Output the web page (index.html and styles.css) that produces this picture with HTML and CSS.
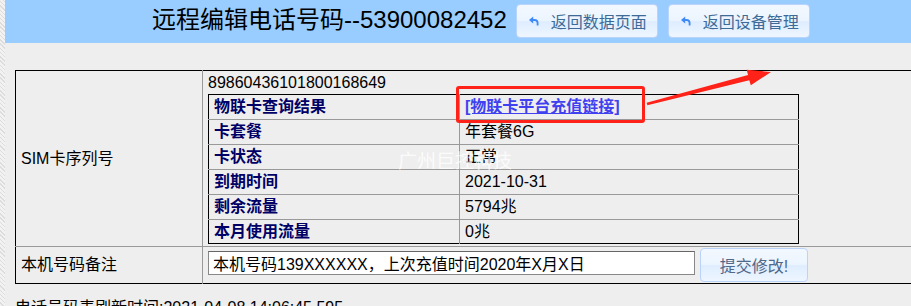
FILE: index.html
```html
<!DOCTYPE html>
<html lang="zh-CN">
<head>
<meta charset="utf-8">
<title>远程编辑电话号码</title>
<link rel="stylesheet" href="styles.css">
</head>
<body>
<div class="stripe"></div>
<div class="main">
  <div class="header">
    <h1 class="title">远程编辑电话号码--53900082452</h1>
    <button class="btn nav-btn"><svg class="ico" width="10" height="10" viewBox="0 0 10 10"><polygon points="0,4 4.2,0.5 4.2,7.5" fill="#3d8af7"/><path d="M4 4 H5.5 Q8.6 4 8.6 7 V9.5" fill="none" stroke="#3d8af7" stroke-width="1.8"/></svg>返回数据页面</button>
    <button class="btn nav-btn"><svg class="ico" width="10" height="10" viewBox="0 0 10 10"><polygon points="0,4 4.2,0.5 4.2,7.5" fill="#3d8af7"/><path d="M4 4 H5.5 Q8.6 4 8.6 7 V9.5" fill="none" stroke="#3d8af7" stroke-width="1.8"/></svg>返回设备管理</button>
  </div>
  <table class="outer">
    <tr class="row-sim">
      <td class="lbl">SIM卡序列号</td>
      <td class="val">
        <div class="serial">89860436101800168649</div>
        <table class="inner">
          <tr><th>物联卡查询结果</th><td><a class="link" href="#">[物联卡平台充值链接]</a></td></tr>
          <tr><th>卡套餐</th><td>年套餐6G</td></tr>
          <tr><th>卡状态</th><td>正常</td></tr>
          <tr><th>到期时间</th><td>2021-10-31</td></tr>
          <tr><th>剩余流量</th><td>5794兆</td></tr>
          <tr><th>本月使用流量</th><td>0兆</td></tr>
        </table>
      </td>
    </tr>
    <tr class="row-note">
      <td class="lbl">本机号码备注</td>
      <td class="val">
        <div class="note-form">
          <input class="note-input" type="text" value="本机号码139XXXXXX，上次充值时间2020年X月X日">
          <button class="btn submit-btn">提交修改!</button>
        </div>
      </td>
    </tr>
  </table>
  <div class="refresh">电话号码表刷新时间:2021-04-08 14:06:45.595</div>
</div>
<div class="watermark">广州巨控科技</div>
<div class="mark-box"></div>
<svg class="mark-arrow" width="911" height="306" viewBox="0 0 911 306"><polygon points="647.4,105.2 749.3,80.2 750.8,85.3 771,72 746.6,69.8 748.1,75.1 646.6,102.8" fill="#ff2218"/></svg>
</body>
</html>
```

FILE: styles.css
```css
html, body {
  margin: 0;
  padding: 0;
  height: 306px;
  overflow: hidden;
  background: #eeeeee;
  font-family: "Liberation Sans", "Noto Sans CJK SC", sans-serif;
  font-size: 16px;
  color: #000;
}
body {
  display: flex;
  position: relative;
}
.stripe {
  width: 5px;
  flex: none;
  background:
    repeating-linear-gradient(45deg, #f2f2f2 0 2px, #dcdcdc 2px 3px),
    #eee;
}
.main {
  flex: 1;
  min-width: 0;
}
.header {
  height: 43px;
  background: #99ccff;
  display: flex;
  align-items: center;
  padding-left: 147px;
}
.title {
  margin: 0 9px 0 0;
  font-size: 24px;
  font-weight: normal;
  line-height: 30px;
  position: relative;
  top: -2px;
}
.btn {
  font-family: "Liberation Sans", "Noto Sans CJK SC", sans-serif;
  border: 1px solid #b9d3fb;
  border-radius: 4px;
  background: linear-gradient(#f3f8ff 0%, #ecf5ff 48%, #deedff 52%, #eef6ff 100%);
  color: #3d6a96;
  cursor: pointer;
  padding: 0;
}
.nav-btn {
  width: 142px;
  height: 34px;
  margin: 0 10px 0 0;
  font-size: 16px;
  display: flex;
  align-items: center;
  padding-left: 12px;
  gap: 12px;
  position: relative;
  top: -1px;
}
.ico { flex: none; }
.outer {
  margin: 27px 0 0 10px;
  width: 905px;
  border-collapse: collapse;
  border: 1px solid #000;
}
.outer > tbody > tr > td,
.outer > tr > td {
  padding: 0;
}
.lbl {
  width: 181px;
  padding: 0 0 0 5px !important;
  border-right: 1px solid #999;
  vertical-align: middle;
  line-height: 20px;
}
.val {
  padding: 2px 0 2px 5px !important;
  vertical-align: top;
}
.row-sim { border-bottom: 1px solid #999; }
.serial {
  line-height: 20px;
  margin-bottom: 1px;
}
.inner {
  width: 591px;
  border-collapse: collapse;
  border: 1px solid #000;
}
.inner th, .inner td {
  height: 24px;
  padding: 0 5px;
  line-height: 24px;
  border-top: 1px solid #999;
  text-align: left;
  white-space: nowrap;
}
.inner tr:first-child th, .inner tr:first-child td { border-top: none; }
.inner tr:last-child th, .inner tr:last-child td { height: 23px; line-height: 23px; }
.inner th {
  width: 240px;
  border-right: 1px solid #999;
  color: #000066;
  font-weight: bold;
}
.link {
  color: #4040f0;
  font-weight: bold;
  text-decoration: underline;
}
.row-note .val {
  padding: 1px 0 1px 5px !important;
  height: 34px;
}
.note-form {
  display: flex;
  align-items: flex-start;
  gap: 5px;
}
.note-input {
  box-sizing: border-box;
  width: 487px;
  height: 24px;
  margin-top: 3px;
  border: 1px solid #888;
  border-top-color: #666;
  background: #fff;
  font-family: "Liberation Sans", "Noto Sans CJK SC", sans-serif;
  font-size: 16px;
  padding: 0 4px;
  color: #000;
}
.submit-btn {
  width: 108px;
  height: 34px;
  font-size: 16px;
  color: #50688a;
}
.refresh {
  margin: 14px 0 0 10px;
  line-height: 20px;
}
.watermark {
  position: absolute;
  left: 398px;
  top: 146px;
  font-size: 19px;
  color: rgba(255, 255, 255, 0.8);
  letter-spacing: 0;
  pointer-events: none;
}
.mark-box {
  position: absolute;
  left: 456px;
  top: 86px;
  width: 183px;
  height: 31px;
  border: 3px solid #ff2218;
  border-radius: 3px;
  pointer-events: none;
}
.mark-arrow {
  position: absolute;
  left: 0;
  top: 0;
  pointer-events: none;
}
```
